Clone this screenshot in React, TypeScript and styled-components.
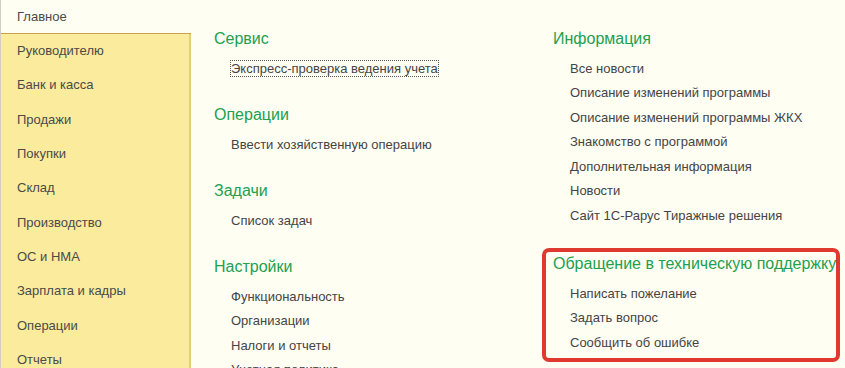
import React from 'react';
import styled, { createGlobalStyle } from 'styled-components';

const GlobalStyle = createGlobalStyle`
  html, body {
    margin: 0;
    padding: 0;
    background: #fefef3;
    font-family: "Liberation Sans", Arial, sans-serif;
  }
`;

interface Section {
  title: string;
  items: string[];
  highlighted?: boolean;
}

const sidebarItems = [
  'Главное',
  'Руководителю',
  'Банк и касса',
  'Продажи',
  'Покупки',
  'Склад',
  'Производство',
  'ОС и НМА',
  'Зарплата и кадры',
  'Операции',
  'Отчеты',
];

const leftSections: Section[] = [
  { title: 'Сервис', items: ['Экспресс-проверка ведения учета'] },
  { title: 'Операции', items: ['Ввести хозяйственную операцию'] },
  { title: 'Задачи', items: ['Список задач'] },
  {
    title: 'Настройки',
    items: ['Функциональность', 'Организации', 'Налоги и отчеты', 'Учетная политика'],
  },
];

const rightSections: Section[] = [
  {
    title: 'Информация',
    items: [
      'Все новости',
      'Описание изменений программы',
      'Описание изменений программы ЖКХ',
      'Знакомство с программой',
      'Дополнительная информация',
      'Новости',
      'Сайт 1С-Рарус Тиражные решения',
    ],
  },
  {
    title: 'Обращение в техническую поддержку',
    items: ['Написать пожелание', 'Задать вопрос', 'Сообщить об ошибке'],
    highlighted: true,
  },
];

const renderSection = (section: Section, focusFirst = false) => {
  const content = (
    <>
      <SectionTitle>{section.title}</SectionTitle>
      <ItemList>
        {section.items.map((item, index) => (
          <Item key={item}>
            <ItemText focused={focusFirst && index === 0}>{item}</ItemText>
          </Item>
        ))}
      </ItemList>
    </>
  );

  if (section.highlighted) {
    return <HighlightBox key={section.title}>{content}</HighlightBox>;
  }
  return <SectionBlock key={section.title}>{content}</SectionBlock>;
};

const App: React.FC = () => {
  return (
    <Page>
      <GlobalStyle />
      <Sidebar>
        {sidebarItems.map((item, index) => (
          <NavItem key={item} active={index === 0}>
            {item}
          </NavItem>
        ))}
      </Sidebar>
      <Content>
        <Column>{leftSections.map((s, i) => renderSection(s, i === 0))}</Column>
        <Column>{rightSections.map((s) => renderSection(s))}</Column>
      </Content>
    </Page>
  );
};

const Page = styled.div`
  display: flex;
  width: 845px;
  height: 368px;
  overflow: hidden;
  background: #fefef3;
`;

const Sidebar = styled.nav`
  width: 188px;
  flex-shrink: 0;
  background: #fbeb9c;
  border-left: 1px solid #cfcfc4;
  border-right: 2px solid #e3cf78;
  display: flex;
  flex-direction: column;
`;

const NavItem = styled.div<{ active?: boolean }>`
  padding-left: 16px;
  font-size: 13px;
  color: #4a4a4a;
  white-space: nowrap;
  line-height: ${(p) => (p.active ? '33px' : '34.33px')};
  background: ${(p) => (p.active ? '#fefef3' : 'transparent')};
  border-bottom: ${(p) => (p.active ? '1px solid #c9a24c' : 'none')};
  margin-right: ${(p) => (p.active ? '-2px' : '0')};
  flex-shrink: 0;
`;

const Content = styled.main`
  flex: 1;
  display: grid;
  grid-template-columns: 339px 1fr;
  padding: 29px 0 0 23px;
  align-items: start;
`;

const Column = styled.div`
  display: flex;
  flex-direction: column;
`;

const SectionBlock = styled.section`
  margin-bottom: 23.75px;
`;

const HighlightBox = styled.section`
  margin: -4px 5px 0 -11px;
  padding: 2px 0 3px 7px;
  border: 4px solid #e03a30;
  border-radius: 7px;
`;

const SectionTitle = styled.h2`
  margin: 0 0 7.75px;
  font-size: 16px;
  font-weight: normal;
  line-height: 20px;
  color: #22a050;
  white-space: nowrap;
`;

const ItemList = styled.div`
  display: flex;
  flex-direction: column;
  padding-left: 17px;
`;

const Item = styled.div`
  font-size: 13px;
  line-height: 24.5px;
  color: #444;
  white-space: nowrap;
`;

const ItemText = styled.span<{ focused?: boolean }>`
  outline: ${(p) => (p.focused ? '1px dotted #555' : 'none')};
  outline-offset: 0px;
`;

export default App;
